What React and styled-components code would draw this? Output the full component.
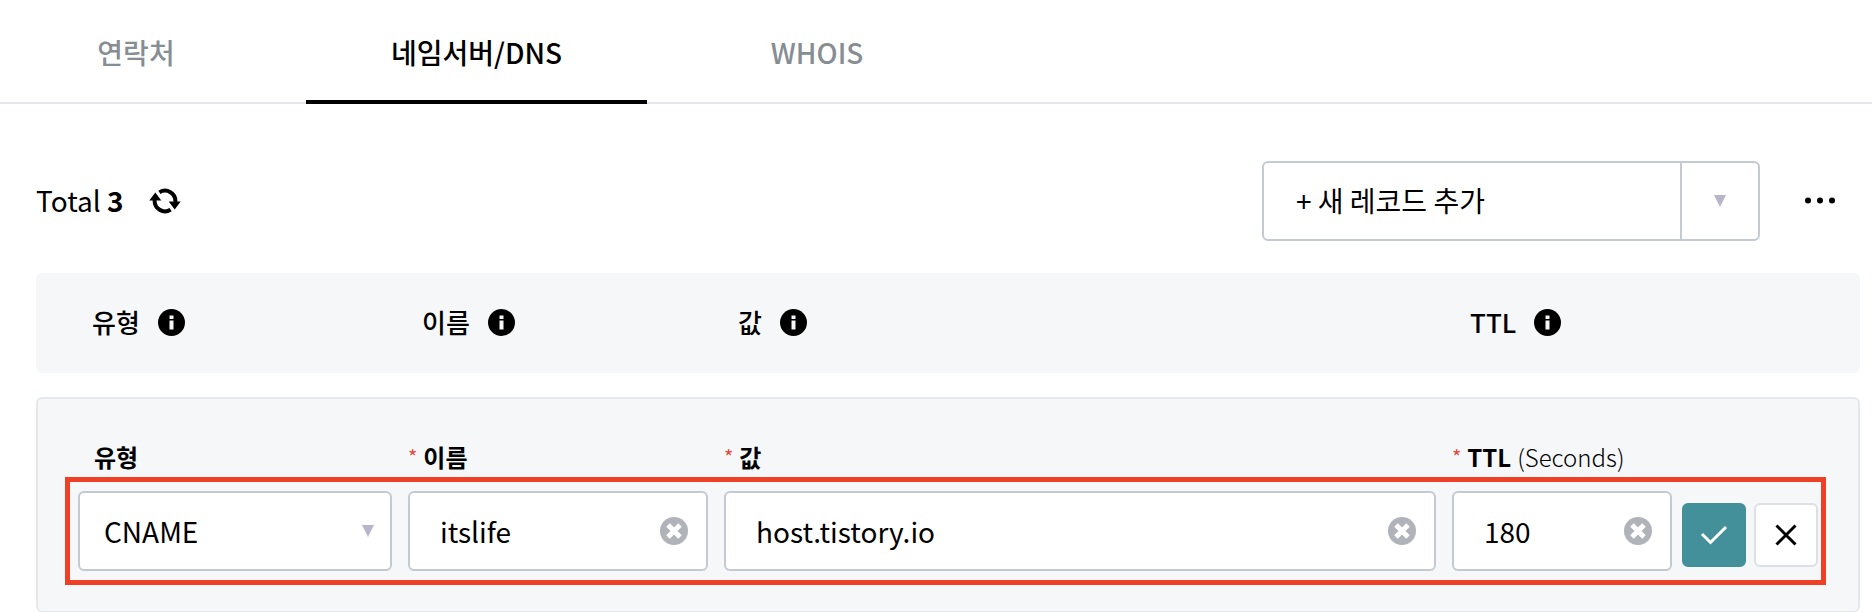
import React, { useState } from "react";
import styled, { createGlobalStyle } from "styled-components";

const GlobalStyle = createGlobalStyle`
  *, *::before, *::after { box-sizing: border-box; }
  body {
    margin: 0;
    background: #fff;
    color: #000;
    font-family: "Noto Sans CJK KR", "Noto Sans", sans-serif;
    font-size: 28px;
    line-height: 40px;
  }
  button, input, select { font: inherit; color: inherit; }
  button { padding: 0; border: 0; background: none; cursor: pointer; }
  svg { display: block; flex: none; }
`;

const Tabs = styled.nav`
  display: flex;
  gap: 34px;
  height: 104px;
  border-bottom: 2px solid #e4e8eb;
`;

const Tab = styled.a`
  display: flex;
  align-items: center;
  justify-content: center;
  min-width: 272px;
  height: 104px;
  padding: 4px 85px 0;
  border-bottom: 4px solid ${(p) => (p.$active ? "#000" : "transparent")};
  color: ${(p) => (p.$active ? "#000" : "#868e94")};
  font-weight: 500;
  text-decoration: none;
  white-space: nowrap;
`;

const Content = styled.main`
  padding: 57px 12px 0 36px;
`;

const Toolbar = styled.div`
  display: flex;
  align-items: center;
  justify-content: space-between;
  margin-bottom: 32px;
`;

const ToolGroup = styled.div`
  display: flex;
  align-items: center;
  gap: ${(p) => p.$gap}px;
`;

const Total = styled.p`
  margin: 0;
  padding-bottom: 3px;
`;

const SplitButton = styled.div`
  display: flex;
  width: 498px;
  height: 80px;
  border: 2px solid #c3cad3;
  border-radius: 6px;
`;

const AddButton = styled.button`
  flex: 1;
  padding: 0 0 3px 32px;
  text-align: left;
`;

const ToggleButton = styled.button`
  display: flex;
  align-items: center;
  justify-content: center;
  width: 78px;
  border-left: 2px solid #c3cad3;
`;

const MoreButton = styled.button`
  display: flex;
  justify-content: center;
  width: 80px;
`;

const columns = "314px 300px minmax(0, 1fr) 220px";

const HeaderRow = styled.div`
  display: grid;
  grid-template-columns: ${columns} 130px;
  gap: 16px;
  align-items: center;
  height: 100px;
  margin-bottom: 24px;
  padding: 0 42px 2px;
  border-radius: 6px;
  background: #f5f7f9;
`;

const HeaderCell = styled.div`
  display: flex;
  align-items: center;
  gap: 18px;
  padding-left: ${(p) => (p.$wide ? 18 : 14)}px;
  font-size: 26px;
  font-weight: 500;
`;

const Panel = styled.section`
  padding: 40px;
  border: 2px solid #e4e7ec;
  border-bottom-width: 1px;
  border-radius: 6px;
  background: #f5f7f9;
`;

const RecordForm = styled.form`
  position: relative;
  display: flex;
  align-items: flex-end;
  gap: 10px;
`;

const Fields = styled.div`
  flex: 1;
  display: grid;
  grid-template-columns: ${columns};
  gap: 16px;
`;

const FieldBox = styled.div`
  display: flex;
  flex-direction: column;
  gap: 16px;
`;

const Label = styled.label`
  display: flex;
  align-items: center;
  gap: 6px;
  padding-left: ${(p) => (p.$required ? 0 : 16)}px;
  font-size: 24px;
  line-height: 36px;
  font-weight: 700;
`;

const Required = styled.span`
  color: #e5493f;
  font-size: 20px;
  font-weight: 400;
`;

const Unit = styled.span`
  font-weight: 300;
`;

const Control = styled.div`
  display: flex;
  align-items: center;
  height: 80px;
  padding: 0 ${(p) => p.$right}px 0 0;
  border: 2px solid #c3cad3;
  border-radius: 6px;
  background: #fff;
`;

const TextInput = styled.input`
  flex: 1;
  min-width: 0;
  height: 76px;
  padding: 0 0 0 30px;
  border: 0;
  outline: 0;
  background: transparent;
`;

const Select = styled.select`
  flex: 1;
  min-width: 0;
  height: 76px;
  padding: 0 0 0 24px;
  border: 0;
  outline: 0;
  background: transparent;
  appearance: none;
`;

const Actions = styled.div`
  display: flex;
  gap: 8px;
  padding-bottom: 4px;
`;

const ActionButton = styled.button`
  display: flex;
  align-items: center;
  justify-content: center;
  width: 64px;
  height: 64px;
  border: 2px solid ${(p) => (p.$primary ? "#43909b" : "#dcdfe4")};
  border-radius: 6px;
  background: ${(p) => (p.$primary ? "#43909b" : "#fff")};
`;

const Highlight = styled.div`
  position: absolute;
  left: -13px;
  right: -8px;
  bottom: -14px;
  height: 108px;
  border: 5px solid #ee4026;
  pointer-events: none;
`;

const Caret = () => (
  <svg width="12" height="12" viewBox="0 0 12 12" aria-hidden="true">
    <path d="M0 0H12L6 12Z" fill="#b8b4ca" />
  </svg>
);

const RefreshIcon = () => (
  <svg width="32" height="26" viewBox="0 0 32 26" aria-hidden="true">
    <path
      d="M10.4 4.4A10.3 10.3 0 0 1 26.3 14M21.6 21.6A10.3 10.3 0 0 1 5.7 12"
      fill="none"
      stroke="#000"
      strokeWidth="4"
    />
    <path d="M0.3 12.4H12.3L6.3 4.6ZM19.7 13.6H31.7L25.7 21.4Z" />
  </svg>
);

const DotsIcon = () => (
  <svg width="32" height="8" viewBox="0 0 32 8" aria-hidden="true">
    <circle cx="4" cy="3.5" r="3" />
    <circle cx="16" cy="3.5" r="3" />
    <circle cx="28" cy="3.5" r="3" />
  </svg>
);

const InfoIcon = () => (
  <svg width="27" height="27" viewBox="0 0 27 27" aria-hidden="true">
    <circle cx="13.5" cy="13.5" r="13.5" />
    <path d="M11.5 6.5H15.5V10H11.5ZM11.5 11.5H15.5V20.5H11.5Z" fill="#f5f7f9" />
  </svg>
);

const ClearIcon = () => (
  <svg width="28" height="28" viewBox="0 0 28 28" aria-hidden="true">
    <circle cx="14" cy="14" r="14" fill="#b0b3b9" />
    <path d="M8 8L20 20M20 8L8 20" stroke="#fff" strokeWidth="5" />
  </svg>
);

const CheckIcon = () => (
  <svg width="28" height="28" viewBox="0 0 28 28" aria-hidden="true">
    <path d="M2 13L10.5 21.5L26 6" fill="none" stroke="#fff" strokeWidth="3" />
  </svg>
);

const CloseIcon = () => (
  <svg width="28" height="28" viewBox="0 0 28 28" aria-hidden="true">
    <path d="M4.5 4.5L23.5 23.5M23.5 4.5L4.5 23.5" stroke="#000" strokeWidth="3" />
  </svg>
);

function TextField({ id, label, unit, initial }) {
  const [value, setValue] = useState(initial);
  return (
    <FieldBox>
      <Label htmlFor={id} $required>
        <Required>*</Required>
        <span>{label}</span>
        {unit && <Unit>{unit}</Unit>}
      </Label>
      <Control $right={18}>
        <TextInput id={id} value={value} onChange={(e) => setValue(e.target.value)} />
        <button type="button" aria-label="지우기" onClick={() => setValue("")}>
          <ClearIcon />
        </button>
      </Control>
    </FieldBox>
  );
}

export default function App() {
  return (
    <>
      <GlobalStyle />
      <Tabs>
        <Tab href="#contact">연락처</Tab>
        <Tab href="#dns" $active aria-current="page">네임서버/DNS</Tab>
        <Tab href="#whois">WHOIS</Tab>
      </Tabs>
      <Content>
        <Toolbar>
          <ToolGroup $gap={25}>
            <Total>
              Total <strong>3</strong>
            </Total>
            <button type="button" aria-label="새로고침">
              <RefreshIcon />
            </button>
          </ToolGroup>
          <ToolGroup $gap={20}>
            <SplitButton>
              <AddButton type="button">+ 새 레코드 추가</AddButton>
              <ToggleButton type="button" aria-label="레코드 유형 선택">
                <Caret />
              </ToggleButton>
            </SplitButton>
            <MoreButton type="button" aria-label="더보기">
              <DotsIcon />
            </MoreButton>
          </ToolGroup>
        </Toolbar>
        <HeaderRow>
          {["유형", "이름", "값", "TTL"].map((name) => (
            <HeaderCell key={name} $wide={name === "TTL"}>
              {name}
              <InfoIcon />
            </HeaderCell>
          ))}
        </HeaderRow>
        <Panel>
          <RecordForm onSubmit={(e) => e.preventDefault()}>
            <Fields>
              <FieldBox>
                <Label htmlFor="record-type">유형</Label>
                <Control $right={16}>
                  <Select id="record-type" defaultValue="CNAME">
                    <option>CNAME</option>
                    <option>A</option>
                    <option>TXT</option>
                  </Select>
                  <Caret />
                </Control>
              </FieldBox>
              <TextField id="record-name" label="이름" initial="itslife" />
              <TextField id="record-value" label="값" initial="host.tistory.io" />
              <TextField id="record-ttl" label="TTL" unit="(Seconds)" initial="180" />
            </Fields>
            <Actions>
              <ActionButton type="submit" $primary aria-label="저장">
                <CheckIcon />
              </ActionButton>
              <ActionButton type="button" aria-label="취소">
                <CloseIcon />
              </ActionButton>
            </Actions>
            <Highlight />
          </RecordForm>
        </Panel>
      </Content>
    </>
  );
}
